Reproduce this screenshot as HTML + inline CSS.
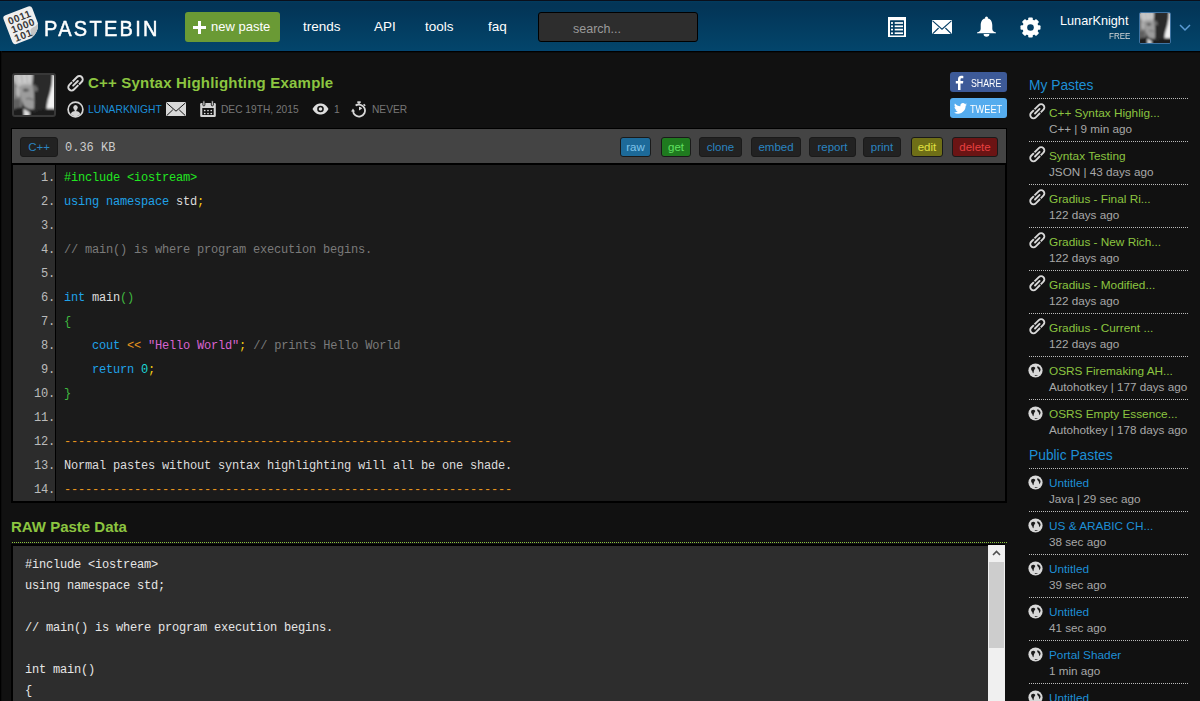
<!DOCTYPE html>
<html><head><meta charset="utf-8">
<style>
*{margin:0;padding:0;box-sizing:border-box}
html,body{width:1200px;height:701px;overflow:hidden;background:#111;font-family:"Liberation Sans",sans-serif;color:#ccc}
.abs{position:absolute}
#topline{left:0;top:0;width:1200px;height:1px;background:#0a0f1b}
#header{left:0;top:1px;width:1200px;height:50px;background:linear-gradient(#023b5e 0,#033557 2px,#033557 6px,#03456b 49px,#044570 49px)}
#hline{left:0;top:51px;width:1200px;height:1px;background:#000}
#hline2{left:0;top:52px;width:1200px;height:1px;background:#0b0b0b}
#leftstrip{left:0;top:51px;width:2px;height:650px;background:linear-gradient(90deg,#000 1px,#0c0c0c 1px)}
.logo-text{left:44px;top:16px;font-size:22.5px;color:#fff;-webkit-text-stroke:0.5px #fff;letter-spacing:2.55px;transform:scaleX(0.89);transform-origin:0 0;white-space:nowrap}
.btn-new{left:185px;top:12px;width:95px;height:30px;background:#6a9a35;border-radius:3px}
.btn-new span{position:absolute;left:26px;top:6.5px;font-size:13px;color:#fff;white-space:nowrap}
.nav{top:19px;font-size:13.5px;color:#fff;white-space:nowrap}
.search{left:538px;top:12px;width:160px;height:30px;background:#2d2d2d;border:1px solid #000;border-radius:3px}
.search span{position:absolute;left:34px;top:8.5px;font-size:12.5px;color:#9a9a9a}
.uname{left:1060px;top:14px;font-size:12.7px;color:#fff;white-space:nowrap}
.free{left:1108.5px;top:30px;font-size:9.8px;color:#d8d8d8;transform:scaleX(0.82);transform-origin:0 0}

.tb{left:11px;top:128px;width:996px;height:36px;background:#444;border:1px solid #000;border-bottom:none}
.tag{top:8px;height:20px;border:1px solid #1a1a1a;border-radius:3px;font-size:11.5px;text-align:center;line-height:18px}
.code{left:11px;top:163px;width:996px;height:340px;border:2px solid #000;background:#1b1b1b}
.gut{left:0;top:0;width:43px;height:336px;background:#2c2c2c;border-right:1px solid #000}
.ln{position:absolute;right:0;width:42px;text-align:right;font-family:"Liberation Mono",monospace;font-size:12px;letter-spacing:-0.2px;color:#bbb;white-space:pre}
.cl{position:absolute;left:51px;font-family:"Liberation Mono",monospace;font-size:12px;letter-spacing:-0.2px;color:#ddd;white-space:pre}
.k{color:#1fa2e8}.p{color:#22e622}.y{color:#f5cc14}.c{color:#7a7a7a}.g{color:#3fb83f}.o{color:#e5961e}.s{color:#d963d0}.n{color:#1cd6d6}

.sbh{left:1029px;font-size:13.8px;color:#1e8fd6;white-space:nowrap}
.dots{left:1029px;width:159px;height:1px;background:repeating-linear-gradient(90deg,#bbb 0 1px,transparent 1px 2px)}
.st{left:1049px;font-size:11.8px;white-space:nowrap}
.sm{left:1049px;font-size:11.7px;color:#a8a8a8;white-space:nowrap}
.raw{left:11px;top:544px;width:994px;height:200px;border:2px solid #000;border-right:none;border-bottom:none;background:#2d2d2d}
.rl{position:absolute;left:12px;font-family:"Liberation Mono",monospace;font-size:12px;letter-spacing:-0.2px;color:#e6e6e6;white-space:pre}
.mono{font-family:"Liberation Mono",monospace}
</style></head><body>
<svg width="0" height="0" style="position:absolute">
<defs>
  <filter id="bl" x="-10%" y="-10%" width="120%" height="120%"><feGaussianBlur stdDeviation="0.8"/></filter>
  
</defs></svg>
<div id="topline" class="abs"></div>
<div id="header" class="abs"></div><div id="hline" class="abs"></div><div id="hline2" class="abs"></div>
<div id="leftstrip" class="abs"></div>

<!-- logo -->
<svg class="abs" style="left:0px;top:0px" width="44" height="50" viewBox="0 0 44 50">
  <g transform="translate(22.3 25.2) rotate(-21) scale(1.06)">
    <path d="M-11.5 -14.5 h23 a3 3 0 0 1 3 3 v15 q-1 4 -4 7 q-3 3 -7 4 h-15 a3 3 0 0 1 -3 -3 v-23 a3 3 0 0 1 3 -3z" fill="#efefef"/>
    <path d="M14.5 3.5 q-1 4 -4 7 q-3 3 -7 4 q1.5 -2 1.5 -5 q0 -2 1 -3 q1 -1 3 -1 q3 0 5.5 -2z" fill="#c4c4c4"/>
    <g font-family="Liberation Sans" font-weight="700" font-size="9.6" fill="#3a3a3a">
    <text x="-11.3" y="-4.6" letter-spacing="0.5">0011</text>
    <text x="-11.3" y="4" letter-spacing="0.5">1000</text>
    <text x="-11.3" y="12.6" letter-spacing="0.5">101</text>
    </g>
  </g>
</svg>
<div class="abs logo-text">PASTEBIN</div>

<div class="abs btn-new">
  <svg class="abs" style="left:8px;top:9.3px" width="13" height="13"><path d="M5 0h3v5h5v3h-5v5h-3v-5h-5v-3h5z" fill="#fff"/></svg>
  <span>new paste</span>
</div>
<div class="abs nav" style="left:303px">trends</div>
<div class="abs nav" style="left:374px">API</div>
<div class="abs nav" style="left:425px">tools</div>
<div class="abs nav" style="left:488px">faq</div>
<div class="abs search"><span>search...</span></div>

<!-- header icons -->
<svg class="abs" style="left:888px;top:16.7px" width="18" height="20.3" viewBox="0 0 18 20.3">
  <rect x="0" y="0" width="18" height="20.3" fill="#fff"/>
  <rect x="2" y="3.3" width="14" height="15.3" rx="0.6" fill="#043c62"/>
  <rect x="3" y="5.15" width="2" height="1.7" fill="#fff"/><rect x="6.7" y="5.15" width="8.3" height="1.7" fill="#fff"/><rect x="3" y="8.450000000000001" width="2" height="1.7" fill="#fff"/><rect x="6.7" y="8.450000000000001" width="8.3" height="1.7" fill="#fff"/><rect x="3" y="11.75" width="2" height="1.7" fill="#fff"/><rect x="6.7" y="11.75" width="8.3" height="1.7" fill="#fff"/><rect x="3" y="15.35" width="2" height="1.7" fill="#fff"/><rect x="6.7" y="15.35" width="8.3" height="1.7" fill="#fff"/>
</svg>
<svg class="abs" style="left:932px;top:19.7px" width="20" height="14.6" viewBox="0 0 20 14.6">
  <rect x="0" y="0" width="20" height="14.6" rx="0.8" fill="#fff"/>
  <path d="M0.6 0.8 L10 9.2 L19.4 0.8 M0.6 13.9 L6.6 8 M19.4 13.9 L13.4 8" stroke="#043e66" stroke-width="1.1" fill="none"/>
</svg>
<svg class="abs" style="left:976.6px;top:16px" width="19" height="21" viewBox="0 0 19 21">
  <circle cx="9.5" cy="2" r="1.5" fill="#fff"/>
  <path d="M9.5 2.3 C13.6 2.3 15.3 5.5 15.3 9.5 V12.8 C15.3 14.8 16.8 16.2 19 16.4 V17.3 H0 V16.4 C2.2 16.2 3.7 14.8 3.7 12.8 V9.5 C3.7 5.5 5.4 2.3 9.5 2.3z" fill="#fff"/>
  <path d="M6.6 18 A2.9 2.7 0 0 0 12.4 18z" fill="#fff"/>
</svg>
<svg class="abs" style="left:1019.8px;top:16.8px" width="21" height="21" viewBox="-10.5 -10.5 21 21">
  <g fill="#fff"><circle r="8"/><rect x="-2.3" y="-10" width="4.6" height="4" rx="1" transform="rotate(0)"/><rect x="-2.3" y="-10" width="4.6" height="4" rx="1" transform="rotate(45)"/><rect x="-2.3" y="-10" width="4.6" height="4" rx="1" transform="rotate(90)"/><rect x="-2.3" y="-10" width="4.6" height="4" rx="1" transform="rotate(135)"/><rect x="-2.3" y="-10" width="4.6" height="4" rx="1" transform="rotate(180)"/><rect x="-2.3" y="-10" width="4.6" height="4" rx="1" transform="rotate(225)"/><rect x="-2.3" y="-10" width="4.6" height="4" rx="1" transform="rotate(270)"/><rect x="-2.3" y="-10" width="4.6" height="4" rx="1" transform="rotate(315)"/></g>
  <circle r="3.3" fill="#053e64"/>
</svg>
<div class="abs uname">LunarKnight</div>
<div class="abs free">FREE</div>
<!-- header avatar -->
<div class="abs" style="left:1139px;top:12px;width:32px;height:32px;border:1px solid #3f74a3;border-radius:2px;overflow:hidden;background:#222">
  <svg width="30" height="30" viewBox="0 0 40 40"><defs><filter id="blB" x="-10%" y="-10%" width="120%" height="120%"><feGaussianBlur stdDeviation="1.2"/></filter></defs>
    <rect width="40" height="40" fill="#333"/>
    <g filter="url(#blB)">
    <rect x="-2" y="-2" width="44" height="44" fill="#2c2c2c"/>
    <path d="M-2 -2 H8 V36 H-2z" fill="#7c7c7c"/>
    <path d="M-2 24 H6 V42 H-2z" fill="#5e5e5e"/>
    <path d="M-2 -2 H19 C19 4 18.5 8 18 11 L4 12 C1 9 -1 5 -2 -2z" fill="#bdbdbd"/><path d="M4 -2 L6 8 M10 -2 L11 8 M15 -2 L15.5 7" stroke="#dcdcdc" stroke-width="1.2"/>
    <path d="M2 12 C4 11 6 12 6 15 L6 21 C5 23 3 22 2 19z" fill="#b4b4b4"/>
    <path d="M6 11 C9 9.5 15 9.5 19.5 10.5 C20 18 20.5 26 20 34 C15 35 11 33 9 29 C7 24 6 18 6 11z" fill="#9c9c9c"/>
    <path d="M19 9 C21 10 24 12 24 15 C23 17 21 17 19.5 15z" fill="#6a6a6a"/>
    <path d="M9 14 C11 13 14 13.5 15.5 15 C14 17 11 17.5 9 16z" fill="#5a5a5a"/>
    <path d="M12 24 C14 23 17 23.5 19 25" stroke="#666" stroke-width="1.3" fill="none"/>
    <path d="M38.5 -2 H42 V34 H32.5 C33 30 33.5 26 34.5 23 C36 19 37 14 38 8z" fill="#f2f2f2"/>
    <path d="M-2 42 V35 C3 33 7 32 10 33 L20 37 C26 35 31 33 42 34 V42z" fill="#1e1e1e"/>
    <path d="M9.5 33.5 L16 37.5 L15 42 L10 42z" fill="#dedede"/>
    </g>
  </svg>
</div>
<svg class="abs" style="left:1179px;top:24px" width="12" height="8"><path d="M1 1 L6 6 L11 1" stroke="#5b9bd5" stroke-width="1.5" fill="none"/></svg>


<!-- page avatar -->
<div class="abs" style="left:12px;top:73px;width:44px;height:44px;border:2px solid #383838;border-radius:3px;overflow:hidden;background:#222">
  <svg width="40" height="40" viewBox="0 0 40 40"><defs><filter id="blA" x="-10%" y="-10%" width="120%" height="120%"><feGaussianBlur stdDeviation="0.8"/></filter></defs>
    <rect width="40" height="40" fill="#333"/>
    <g filter="url(#blA)">
    <rect x="-2" y="-2" width="44" height="44" fill="#2c2c2c"/>
    <path d="M-2 -2 H8 V36 H-2z" fill="#7c7c7c"/>
    <path d="M-2 24 H6 V42 H-2z" fill="#5e5e5e"/>
    <path d="M-2 -2 H19 C19 4 18.5 8 18 11 L4 12 C1 9 -1 5 -2 -2z" fill="#bdbdbd"/><path d="M4 -2 L6 8 M10 -2 L11 8 M15 -2 L15.5 7" stroke="#dcdcdc" stroke-width="1.2"/>
    <path d="M2 12 C4 11 6 12 6 15 L6 21 C5 23 3 22 2 19z" fill="#b4b4b4"/>
    <path d="M6 11 C9 9.5 15 9.5 19.5 10.5 C20 18 20.5 26 20 34 C15 35 11 33 9 29 C7 24 6 18 6 11z" fill="#9c9c9c"/>
    <path d="M19 9 C21 10 24 12 24 15 C23 17 21 17 19.5 15z" fill="#6a6a6a"/>
    <path d="M9 14 C11 13 14 13.5 15.5 15 C14 17 11 17.5 9 16z" fill="#5a5a5a"/>
    <path d="M12 24 C14 23 17 23.5 19 25" stroke="#666" stroke-width="1.3" fill="none"/>
    <path d="M38.5 -2 H42 V34 H32.5 C33 30 33.5 26 34.5 23 C36 19 37 14 38 8z" fill="#f2f2f2"/>
    <path d="M-2 42 V35 C3 33 7 32 10 33 L20 37 C26 35 31 33 42 34 V42z" fill="#1e1e1e"/>
    <path d="M9.5 33.5 L16 37.5 L15 42 L10 42z" fill="#dedede"/>
    </g>
  </svg>
</div>
<!-- title -->
<svg class="abs" style="left:66px;top:74px" width="18" height="18" viewBox="-9 -9 18 18">
  <g transform="translate(0.5 0.3) rotate(-45) scale(0.92)" fill="none" stroke="#d8d8d8" stroke-width="2.1">
    <path d="M-1.8 -3.6 H-6 A3.6 3.6 0 0 0 -6 3.6 H0.8"/>
    <path d="M1.8 3.6 H6 A3.6 3.6 0 0 0 6 -3.6 H-0.8"/>
    <path d="M-3.6 0 H3.6" stroke-linecap="round"/>
  </g>
</svg>
<div class="abs" style="left:88px;top:74px;font-size:15px;font-weight:700;color:#8cc540;letter-spacing:0.2px;white-space:nowrap">C++ Syntax Highlighting Example</div>
<!-- meta row -->
<svg class="abs" style="left:66.5px;top:100.8px" width="17" height="17" viewBox="0 0 17 17">
  <circle cx="8.5" cy="8.5" r="7.4" fill="none" stroke="#d4d4d4" stroke-width="1.7"/>
  <ellipse cx="8.5" cy="6.4" rx="2.2" ry="2.5" fill="#d4d4d4"/>
  <rect x="7.6" y="8" width="1.8" height="2" fill="#d4d4d4"/>
  <path d="M3.6 13.3 C4.4 11 6 10 8.5 10 S12.6 11 13.4 13.3 A7 7 0 0 1 3.6 13.3z" fill="#d4d4d4"/>
</svg>
<div class="abs" style="left:88px;top:104px;font-size:10.3px;color:#1c8fd8;white-space:nowrap">LUNARKNIGHT</div>
<svg class="abs" style="left:166px;top:101.8px" width="20" height="14.5" viewBox="0 0 20 14.5">
  <rect x="0" y="0" width="20" height="14.5" rx="1.2" fill="#d8d8d8"/>
  <path d="M0.7 1 L10 9.2 L19.3 1 M0.7 13.6 L6.8 7.8 M19.3 13.6 L13.2 7.8" stroke="#151515" stroke-width="1" fill="none"/>
</svg>
<svg class="abs" style="left:200px;top:100px" width="16" height="17.5" viewBox="0 0 16 17.5">
  <rect x="0.2" y="3" width="15.6" height="14" rx="1.3" fill="#d4d4d4"/>
  <rect x="2.3" y="8" width="11.4" height="7" fill="#121212"/>
  <circle cx="4.75" cy="10.5" r="0.85" fill="#e0e0e0"/><circle cx="4.75" cy="13.5" r="0.85" fill="#e0e0e0"/><circle cx="8" cy="10.5" r="0.85" fill="#e0e0e0"/><circle cx="8" cy="13.5" r="0.85" fill="#e0e0e0"/><circle cx="11.25" cy="10.5" r="0.85" fill="#e0e0e0"/><circle cx="11.25" cy="13.5" r="0.85" fill="#e0e0e0"/>
  <rect x="2.9" y="0.8" width="2" height="5" rx="0.8" fill="#e0e0e0" stroke="#121212" stroke-width="0.9"/>
  <rect x="11.3" y="0.8" width="2" height="5" rx="0.8" fill="#e0e0e0" stroke="#121212" stroke-width="0.9"/>
</svg>
<div class="abs" style="left:221px;top:104px;font-size:10.2px;color:#777;white-space:nowrap">DEC 19TH, 2015</div>
<svg class="abs" style="left:312px;top:103px" width="17" height="12" viewBox="0 0 17 12">
  <path d="M0.5 6 C3 1.5 6 0.5 8.5 0.5 S14 1.5 16.5 6 C14 10.5 11 11.5 8.5 11.5 S3 10.5 0.5 6z" fill="#ddd"/>
  <circle cx="8.5" cy="6" r="3.3" fill="#121212"/><circle cx="8.5" cy="6" r="1.8" fill="#ddd"/>
</svg>
<div class="abs" style="left:334px;top:104px;font-size:10.2px;color:#777">1</div>
<svg class="abs" style="left:351px;top:100.5px" width="17" height="17" viewBox="0 0 17 17">
  <path d="M4.6 4.6 A6 6 0 1 1 2 9.8" fill="none" stroke="#d8d8d8" stroke-width="1.8"/>
  <path d="M0 10.6 L4 10.6 L2 7.4z" fill="#d8d8d8"/>
  <rect x="6.3" y="0.3" width="3.4" height="1.7" fill="#d8d8d8"/><rect x="7.3" y="1.5" width="1.4" height="2.2" fill="#d8d8d8"/>
  <path d="M12.6 3.2 L14.2 4.8" stroke="#d8d8d8" stroke-width="1.5"/>
  <path d="M8 9.5 V5.8 A3.7 3.7 0 0 1 11.2 7.6z" fill="#d8d8d8"/>
</svg>
<div class="abs" style="left:372px;top:104px;font-size:10.2px;color:#777">NEVER</div>

<!-- share -->
<div class="abs" style="left:950px;top:72px;width:57px;height:20px;background:#3d5a98;border-radius:3px">
  <svg class="abs" style="left:5px;top:2.5px" width="9" height="15" viewBox="0 0 9 15"><path d="M5.5 15 V8.5 H8 L8.3 6 H5.5 V4.5 C5.5 3.7 5.8 3.2 6.8 3.2 H8.3 V1 C7.8 .9 7 .8 6.2 .8 C4.2 .8 3 2 3 4.2 V6 H.8 V8.5 H3 V15z" fill="#fff"/></svg>
  <div class="abs" style="left:21px;top:6px;font-size:10px;color:#fff;transform:scaleX(0.88);transform-origin:0 0">SHARE</div>
</div>
<div class="abs" style="left:950px;top:98px;width:57px;height:20px;background:#55acee;border-radius:3px">
  <svg class="abs" style="left:4px;top:5px" width="13" height="11" viewBox="0 0 24 20"><path d="M24 2.4c-.9.4-1.8.6-2.8.8 1-.6 1.8-1.6 2.2-2.7-1 .6-2 1-3.1 1.2C19.3.6 18 0 16.6 0c-2.7 0-4.9 2.2-4.9 4.9 0 .4 0 .8.1 1.1C7.7 5.8 4.1 3.9 1.7.9c-.4.7-.7 1.6-.7 2.5 0 1.7.9 3.2 2.2 4.1-.8 0-1.6-.2-2.2-.6v.1c0 2.4 1.7 4.4 3.9 4.8-.4.1-.8.2-1.3.2-.3 0-.6 0-.9-.1.6 2 2.4 3.4 4.6 3.4-1.7 1.3-3.8 2.1-6.1 2.1-.4 0-.8 0-1.2-.1 2.2 1.4 4.8 2.2 7.5 2.2 9.1 0 14-7.5 14-14v-.6c1-.7 1.8-1.6 2.5-2.5z" fill="#fff"/></svg>
  <div class="abs" style="left:20px;top:6px;font-size:10px;color:#fff;transform:scaleX(0.92);transform-origin:0 0">TWEET</div>
</div>

<div class="abs tb">
<div class="abs tag" style="left:8px;width:38px;background:#222;color:#2b84c0">C++</div>
<div class="abs mono" style="left:53px;top:12px;font-size:12px;color:#ccc;white-space:pre">0.36 KB</div>
<div class="abs tag" style="left:608px;width:31px;background:#1d6a99;color:#7fc4ea">raw</div>
<div class="abs tag" style="left:649px;width:30px;background:#1f7a1f;color:#5fe05f">get</div>
<div class="abs tag" style="left:687px;width:43px;background:#222;color:#2b84c0">clone</div>
<div class="abs tag" style="left:739px;width:50px;background:#222;color:#2b84c0">embed</div>
<div class="abs tag" style="left:797px;width:47px;background:#222;color:#2b84c0">report</div>
<div class="abs tag" style="left:851px;width:38px;background:#222;color:#2b84c0">print</div>
<div class="abs tag" style="left:899px;width:32px;background:#6f6f17;color:#e0e040">edit</div>
<div class="abs tag" style="left:940px;width:46px;background:#6b1414;color:#e84040">delete</div>
</div>
<div class="abs code">
<div class="abs gut"></div>
<div class="ln" style="top:6px;left:0">1.</div><div class="cl" style="top:6px"><span class="p">#include &lt;iostream&gt;</span></div>
<div class="ln" style="top:30px;left:0">2.</div><div class="cl" style="top:30px"><span class="k">using</span> <span class="k">namespace</span> std<span class="y">;</span></div>
<div class="ln" style="top:54px;left:0">3.</div><div class="cl" style="top:54px"></div>
<div class="ln" style="top:78px;left:0">4.</div><div class="cl" style="top:78px"><span class="c">// main() is where program execution begins.</span></div>
<div class="ln" style="top:102px;left:0">5.</div><div class="cl" style="top:102px"></div>
<div class="ln" style="top:126px;left:0">6.</div><div class="cl" style="top:126px"><span class="k">int</span> main<span class="g">()</span></div>
<div class="ln" style="top:150px;left:0">7.</div><div class="cl" style="top:150px"><span class="g">{</span></div>
<div class="ln" style="top:174px;left:0">8.</div><div class="cl" style="top:174px">    <span class="k">cout</span> <span class="o">&lt;&lt;</span> <span class="s">"Hello World"</span><span class="y">;</span> <span class="c">// prints Hello World</span></div>
<div class="ln" style="top:198px;left:0">9.</div><div class="cl" style="top:198px">    <span class="k">return</span> <span class="n">0</span><span class="y">;</span></div>
<div class="ln" style="top:222px;left:0">10.</div><div class="cl" style="top:222px"><span class="g">}</span></div>
<div class="ln" style="top:246px;left:0">11.</div><div class="cl" style="top:246px"></div>
<div class="ln" style="top:270px;left:0">12.</div><div class="cl" style="top:270px"><span class="o">----------------------------------------------------------------</span></div>
<div class="ln" style="top:294px;left:0">13.</div><div class="cl" style="top:294px">Normal pastes without syntax highlighting will all be one shade.</div>
<div class="ln" style="top:318px;left:0">14.</div><div class="cl" style="top:318px"><span class="o">----------------------------------------------------------------</span></div>
</div>

<div class="abs sbh" style="top:77.5px">My Pastes</div>
<div class="abs dots" style="top:98px"></div>
<svg class="abs" style="left:1028px;top:102px" width="18" height="18" viewBox="-9 -9 18 18"><g transform="translate(0.3 0.2) rotate(-45) scale(0.9)" fill="none" stroke="#d8d8d8" stroke-width="2.1"><path d="M-1.8 -3.6 H-6 A3.6 3.6 0 0 0 -6 3.6 H0.8"/><path d="M1.8 3.6 H6 A3.6 3.6 0 0 0 6 -3.6 H-0.8"/><path d="M-3.6 0 H3.6" stroke-linecap="round"/></g></svg>
<div class="abs st" style="top:105.5px;color:#8cc540">C++ Syntax Highlig...</div>
<div class="abs sm" style="top:122px">C++ | 9 min ago</div>
<div class="abs dots" style="top:141px"></div>
<svg class="abs" style="left:1028px;top:145px" width="18" height="18" viewBox="-9 -9 18 18"><g transform="translate(0.3 0.2) rotate(-45) scale(0.9)" fill="none" stroke="#d8d8d8" stroke-width="2.1"><path d="M-1.8 -3.6 H-6 A3.6 3.6 0 0 0 -6 3.6 H0.8"/><path d="M1.8 3.6 H6 A3.6 3.6 0 0 0 6 -3.6 H-0.8"/><path d="M-3.6 0 H3.6" stroke-linecap="round"/></g></svg>
<div class="abs st" style="top:148.5px;color:#8cc540">Syntax Testing</div>
<div class="abs sm" style="top:165px">JSON | 43 days ago</div>
<div class="abs dots" style="top:184px"></div>
<svg class="abs" style="left:1028px;top:188px" width="18" height="18" viewBox="-9 -9 18 18"><g transform="translate(0.3 0.2) rotate(-45) scale(0.9)" fill="none" stroke="#d8d8d8" stroke-width="2.1"><path d="M-1.8 -3.6 H-6 A3.6 3.6 0 0 0 -6 3.6 H0.8"/><path d="M1.8 3.6 H6 A3.6 3.6 0 0 0 6 -3.6 H-0.8"/><path d="M-3.6 0 H3.6" stroke-linecap="round"/></g></svg>
<div class="abs st" style="top:191.5px;color:#8cc540">Gradius - Final Ri...</div>
<div class="abs sm" style="top:208px">122 days ago</div>
<div class="abs dots" style="top:227px"></div>
<svg class="abs" style="left:1028px;top:231px" width="18" height="18" viewBox="-9 -9 18 18"><g transform="translate(0.3 0.2) rotate(-45) scale(0.9)" fill="none" stroke="#d8d8d8" stroke-width="2.1"><path d="M-1.8 -3.6 H-6 A3.6 3.6 0 0 0 -6 3.6 H0.8"/><path d="M1.8 3.6 H6 A3.6 3.6 0 0 0 6 -3.6 H-0.8"/><path d="M-3.6 0 H3.6" stroke-linecap="round"/></g></svg>
<div class="abs st" style="top:234.5px;color:#8cc540">Gradius - New Rich...</div>
<div class="abs sm" style="top:251px">122 days ago</div>
<div class="abs dots" style="top:270px"></div>
<svg class="abs" style="left:1028px;top:274px" width="18" height="18" viewBox="-9 -9 18 18"><g transform="translate(0.3 0.2) rotate(-45) scale(0.9)" fill="none" stroke="#d8d8d8" stroke-width="2.1"><path d="M-1.8 -3.6 H-6 A3.6 3.6 0 0 0 -6 3.6 H0.8"/><path d="M1.8 3.6 H6 A3.6 3.6 0 0 0 6 -3.6 H-0.8"/><path d="M-3.6 0 H3.6" stroke-linecap="round"/></g></svg>
<div class="abs st" style="top:277.5px;color:#8cc540">Gradius - Modified...</div>
<div class="abs sm" style="top:294px">122 days ago</div>
<div class="abs dots" style="top:313px"></div>
<svg class="abs" style="left:1028px;top:317px" width="18" height="18" viewBox="-9 -9 18 18"><g transform="translate(0.3 0.2) rotate(-45) scale(0.9)" fill="none" stroke="#d8d8d8" stroke-width="2.1"><path d="M-1.8 -3.6 H-6 A3.6 3.6 0 0 0 -6 3.6 H0.8"/><path d="M1.8 3.6 H6 A3.6 3.6 0 0 0 6 -3.6 H-0.8"/><path d="M-3.6 0 H3.6" stroke-linecap="round"/></g></svg>
<div class="abs st" style="top:320.5px;color:#8cc540">Gradius - Current ...</div>
<div class="abs sm" style="top:337px">122 days ago</div>
<div class="abs dots" style="top:356px"></div>
<svg class="abs" style="left:1028.3px;top:362.7px" width="15" height="15" viewBox="0 0 15 15"><circle cx="7.5" cy="7.5" r="7.1" fill="#d8d8d8"/><path d="M3.6 4.3 C4.6 3.6 6.2 3.6 7 4.4 C7.6 5.1 7 5.9 6.4 6.5 C5.9 7.2 5.8 8.3 5.6 9.6 C5.4 10.4 4.9 10.4 4.7 9.6 C4.5 8.6 4.2 7.8 3.5 7.2 C2.9 6.4 3 5 3.6 4.3z" fill="#1a1a1a"/><path d="M9.6 3.2 C11.3 3.8 12.4 5 12.6 6.6 C12.5 7.6 12 8.6 11.4 9.2 C11 8.4 11.1 7.3 10.7 6.6 C10.2 5.9 9.4 5.4 9.2 4.6 C9.1 4 9.2 3.5 9.6 3.2z" fill="#1a1a1a"/><path d="M6.4 12.4 C7.6 11.9 9 12 10 12.3 C9 12.9 7.4 13 6.4 12.4z" fill="#1a1a1a"/></svg>
<div class="abs st" style="top:363.5px;color:#8cc540">OSRS Firemaking AH...</div>
<div class="abs sm" style="top:380px">Autohotkey | 177 days ago</div>
<div class="abs dots" style="top:399px"></div>
<svg class="abs" style="left:1028.3px;top:405.7px" width="15" height="15" viewBox="0 0 15 15"><circle cx="7.5" cy="7.5" r="7.1" fill="#d8d8d8"/><path d="M3.6 4.3 C4.6 3.6 6.2 3.6 7 4.4 C7.6 5.1 7 5.9 6.4 6.5 C5.9 7.2 5.8 8.3 5.6 9.6 C5.4 10.4 4.9 10.4 4.7 9.6 C4.5 8.6 4.2 7.8 3.5 7.2 C2.9 6.4 3 5 3.6 4.3z" fill="#1a1a1a"/><path d="M9.6 3.2 C11.3 3.8 12.4 5 12.6 6.6 C12.5 7.6 12 8.6 11.4 9.2 C11 8.4 11.1 7.3 10.7 6.6 C10.2 5.9 9.4 5.4 9.2 4.6 C9.1 4 9.2 3.5 9.6 3.2z" fill="#1a1a1a"/><path d="M6.4 12.4 C7.6 11.9 9 12 10 12.3 C9 12.9 7.4 13 6.4 12.4z" fill="#1a1a1a"/></svg>
<div class="abs st" style="top:406.5px;color:#8cc540">OSRS Empty Essence...</div>
<div class="abs sm" style="top:423px">Autohotkey | 178 days ago</div>
<div class="abs sbh" style="top:447.5px">Public Pastes</div>
<div class="abs dots" style="top:468px"></div>
<svg class="abs" style="left:1028.3px;top:474.7px" width="15" height="15" viewBox="0 0 15 15"><circle cx="7.5" cy="7.5" r="7.1" fill="#d8d8d8"/><path d="M3.6 4.3 C4.6 3.6 6.2 3.6 7 4.4 C7.6 5.1 7 5.9 6.4 6.5 C5.9 7.2 5.8 8.3 5.6 9.6 C5.4 10.4 4.9 10.4 4.7 9.6 C4.5 8.6 4.2 7.8 3.5 7.2 C2.9 6.4 3 5 3.6 4.3z" fill="#1a1a1a"/><path d="M9.6 3.2 C11.3 3.8 12.4 5 12.6 6.6 C12.5 7.6 12 8.6 11.4 9.2 C11 8.4 11.1 7.3 10.7 6.6 C10.2 5.9 9.4 5.4 9.2 4.6 C9.1 4 9.2 3.5 9.6 3.2z" fill="#1a1a1a"/><path d="M6.4 12.4 C7.6 11.9 9 12 10 12.3 C9 12.9 7.4 13 6.4 12.4z" fill="#1a1a1a"/></svg>
<div class="abs st" style="top:475.5px;color:#1e8fd6">Untitled</div>
<div class="abs sm" style="top:492px">Java | 29 sec ago</div>
<div class="abs dots" style="top:511px"></div>
<svg class="abs" style="left:1028.3px;top:517.7px" width="15" height="15" viewBox="0 0 15 15"><circle cx="7.5" cy="7.5" r="7.1" fill="#d8d8d8"/><path d="M3.6 4.3 C4.6 3.6 6.2 3.6 7 4.4 C7.6 5.1 7 5.9 6.4 6.5 C5.9 7.2 5.8 8.3 5.6 9.6 C5.4 10.4 4.9 10.4 4.7 9.6 C4.5 8.6 4.2 7.8 3.5 7.2 C2.9 6.4 3 5 3.6 4.3z" fill="#1a1a1a"/><path d="M9.6 3.2 C11.3 3.8 12.4 5 12.6 6.6 C12.5 7.6 12 8.6 11.4 9.2 C11 8.4 11.1 7.3 10.7 6.6 C10.2 5.9 9.4 5.4 9.2 4.6 C9.1 4 9.2 3.5 9.6 3.2z" fill="#1a1a1a"/><path d="M6.4 12.4 C7.6 11.9 9 12 10 12.3 C9 12.9 7.4 13 6.4 12.4z" fill="#1a1a1a"/></svg>
<div class="abs st" style="top:518.5px;color:#1e8fd6">US &amp; ARABIC CH...</div>
<div class="abs sm" style="top:535px">38 sec ago</div>
<div class="abs dots" style="top:554px"></div>
<svg class="abs" style="left:1028.3px;top:560.7px" width="15" height="15" viewBox="0 0 15 15"><circle cx="7.5" cy="7.5" r="7.1" fill="#d8d8d8"/><path d="M3.6 4.3 C4.6 3.6 6.2 3.6 7 4.4 C7.6 5.1 7 5.9 6.4 6.5 C5.9 7.2 5.8 8.3 5.6 9.6 C5.4 10.4 4.9 10.4 4.7 9.6 C4.5 8.6 4.2 7.8 3.5 7.2 C2.9 6.4 3 5 3.6 4.3z" fill="#1a1a1a"/><path d="M9.6 3.2 C11.3 3.8 12.4 5 12.6 6.6 C12.5 7.6 12 8.6 11.4 9.2 C11 8.4 11.1 7.3 10.7 6.6 C10.2 5.9 9.4 5.4 9.2 4.6 C9.1 4 9.2 3.5 9.6 3.2z" fill="#1a1a1a"/><path d="M6.4 12.4 C7.6 11.9 9 12 10 12.3 C9 12.9 7.4 13 6.4 12.4z" fill="#1a1a1a"/></svg>
<div class="abs st" style="top:561.5px;color:#1e8fd6">Untitled</div>
<div class="abs sm" style="top:578px">39 sec ago</div>
<div class="abs dots" style="top:597px"></div>
<svg class="abs" style="left:1028.3px;top:603.7px" width="15" height="15" viewBox="0 0 15 15"><circle cx="7.5" cy="7.5" r="7.1" fill="#d8d8d8"/><path d="M3.6 4.3 C4.6 3.6 6.2 3.6 7 4.4 C7.6 5.1 7 5.9 6.4 6.5 C5.9 7.2 5.8 8.3 5.6 9.6 C5.4 10.4 4.9 10.4 4.7 9.6 C4.5 8.6 4.2 7.8 3.5 7.2 C2.9 6.4 3 5 3.6 4.3z" fill="#1a1a1a"/><path d="M9.6 3.2 C11.3 3.8 12.4 5 12.6 6.6 C12.5 7.6 12 8.6 11.4 9.2 C11 8.4 11.1 7.3 10.7 6.6 C10.2 5.9 9.4 5.4 9.2 4.6 C9.1 4 9.2 3.5 9.6 3.2z" fill="#1a1a1a"/><path d="M6.4 12.4 C7.6 11.9 9 12 10 12.3 C9 12.9 7.4 13 6.4 12.4z" fill="#1a1a1a"/></svg>
<div class="abs st" style="top:604.5px;color:#1e8fd6">Untitled</div>
<div class="abs sm" style="top:621px">41 sec ago</div>
<div class="abs dots" style="top:640px"></div>
<svg class="abs" style="left:1028.3px;top:646.7px" width="15" height="15" viewBox="0 0 15 15"><circle cx="7.5" cy="7.5" r="7.1" fill="#d8d8d8"/><path d="M3.6 4.3 C4.6 3.6 6.2 3.6 7 4.4 C7.6 5.1 7 5.9 6.4 6.5 C5.9 7.2 5.8 8.3 5.6 9.6 C5.4 10.4 4.9 10.4 4.7 9.6 C4.5 8.6 4.2 7.8 3.5 7.2 C2.9 6.4 3 5 3.6 4.3z" fill="#1a1a1a"/><path d="M9.6 3.2 C11.3 3.8 12.4 5 12.6 6.6 C12.5 7.6 12 8.6 11.4 9.2 C11 8.4 11.1 7.3 10.7 6.6 C10.2 5.9 9.4 5.4 9.2 4.6 C9.1 4 9.2 3.5 9.6 3.2z" fill="#1a1a1a"/><path d="M6.4 12.4 C7.6 11.9 9 12 10 12.3 C9 12.9 7.4 13 6.4 12.4z" fill="#1a1a1a"/></svg>
<div class="abs st" style="top:647.5px;color:#1e8fd6">Portal Shader</div>
<div class="abs sm" style="top:664px">1 min ago</div>
<div class="abs dots" style="top:683px"></div>
<svg class="abs" style="left:1028.3px;top:689.7px" width="15" height="15" viewBox="0 0 15 15"><circle cx="7.5" cy="7.5" r="7.1" fill="#d8d8d8"/><path d="M3.6 4.3 C4.6 3.6 6.2 3.6 7 4.4 C7.6 5.1 7 5.9 6.4 6.5 C5.9 7.2 5.8 8.3 5.6 9.6 C5.4 10.4 4.9 10.4 4.7 9.6 C4.5 8.6 4.2 7.8 3.5 7.2 C2.9 6.4 3 5 3.6 4.3z" fill="#1a1a1a"/><path d="M9.6 3.2 C11.3 3.8 12.4 5 12.6 6.6 C12.5 7.6 12 8.6 11.4 9.2 C11 8.4 11.1 7.3 10.7 6.6 C10.2 5.9 9.4 5.4 9.2 4.6 C9.1 4 9.2 3.5 9.6 3.2z" fill="#1a1a1a"/><path d="M6.4 12.4 C7.6 11.9 9 12 10 12.3 C9 12.9 7.4 13 6.4 12.4z" fill="#1a1a1a"/></svg>
<div class="abs st" style="top:690.5px;color:#1e8fd6">Untitled</div>
<div class="abs" style="left:11px;top:518px;font-size:15px;font-weight:700;color:#8cc540;white-space:nowrap">RAW Paste Data</div>
<div class="abs" style="left:12px;top:542px;width:995px;height:1px;background:repeating-linear-gradient(90deg,#8cc540 0 1px,transparent 1px 2px)"></div>
<div class="abs raw">
<div class="rl" style="top:12px">#include &lt;iostream&gt;</div>
<div class="rl" style="top:33px">using namespace std;</div>
<div class="rl" style="top:54px"></div>
<div class="rl" style="top:75px">// main() is where program execution begins.</div>
<div class="rl" style="top:96px"></div>
<div class="rl" style="top:117px">int main()</div>
<div class="rl" style="top:138px">{</div>
<div class="rl" style="top:159px">    cout &lt;&lt; "Hello World"; // prints Hello World</div>
</div>
<div class="abs" style="left:988px;top:545px;width:17px;height:156px;background:#f0f0f0">
<div class="abs" style="left:1px;top:17px;width:15px;height:86px;background:#cdcdcd"></div>
<svg class="abs" style="left:4px;top:5px" width="9" height="6"><path d="M1 5 L4.5 1.5 L8 5" stroke="#505050" stroke-width="1.6" fill="none"/></svg>
</div>

</body></html>
